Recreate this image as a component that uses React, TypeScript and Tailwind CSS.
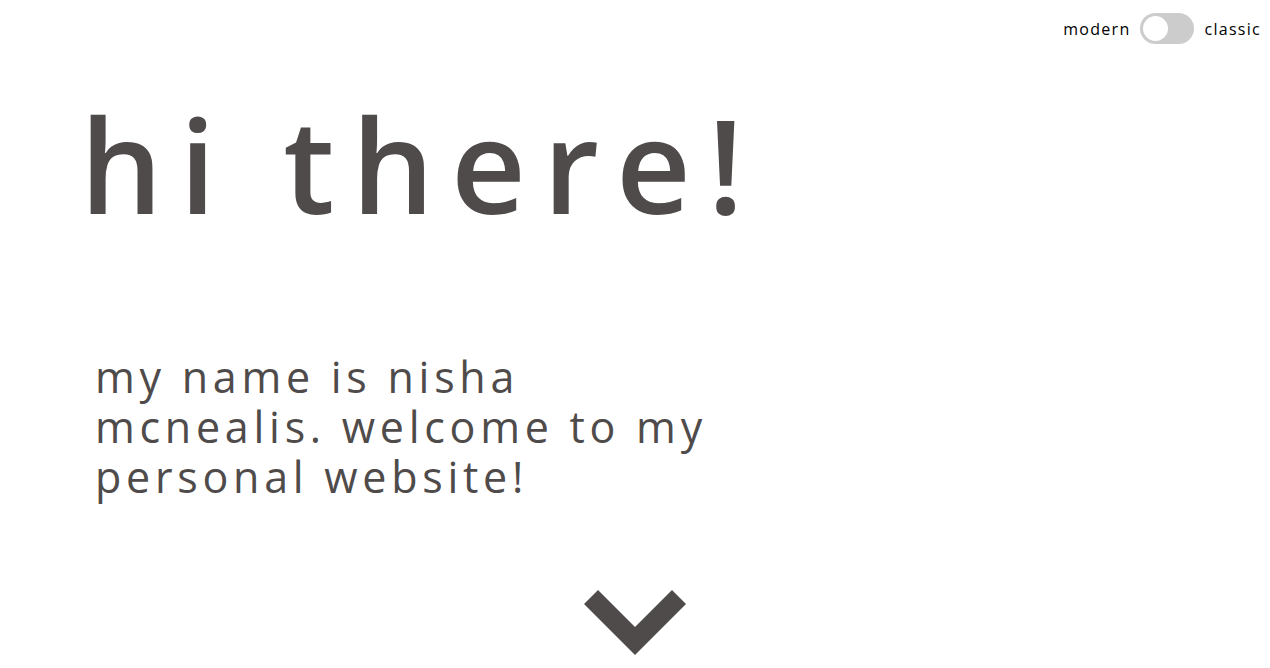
const Chevron = () => (
  <svg width="102" height="66" viewBox="0 0 102 66" className="block">
    <path d="M0 14 L14 0 L51 37 L88 0 L102 14 L51 65 Z" fill="#4f4b4a" />
  </svg>
);

const App = () => {
  return (
    <div className="relative w-full h-[668px] bg-white text-[#4f4b4a] font-['Open_Sans',sans-serif] overflow-hidden">
      <div className="absolute top-[13px] right-[9px] flex items-center gap-[10px] text-black text-[16px] tracking-[0.08em]">
        <span>modern</span>
        <div className="w-[54px] h-[31px] rounded-full bg-[#cccccc] p-[3px] flex items-center">
          <div className="w-[25px] h-[25px] rounded-full bg-white" />
        </div>
        <span>classic</span>
      </div>

      <div className="flex flex-col">
        <h1 className="pl-[80px] pt-[74px] text-[130px] leading-[180px] font-semibold tracking-[0.13em]">
          hi there!
        </h1>
        <p className="pl-[95px] mt-[98px] w-[740px] text-[43px] leading-[50px] tracking-[0.11em]">
          my name is nisha mcnealis. welcome to my personal website!
        </p>
        <div className="flex justify-center mt-[88px]">
          <Chevron />
        </div>
      </div>
    </div>
  );
};

export default App;
